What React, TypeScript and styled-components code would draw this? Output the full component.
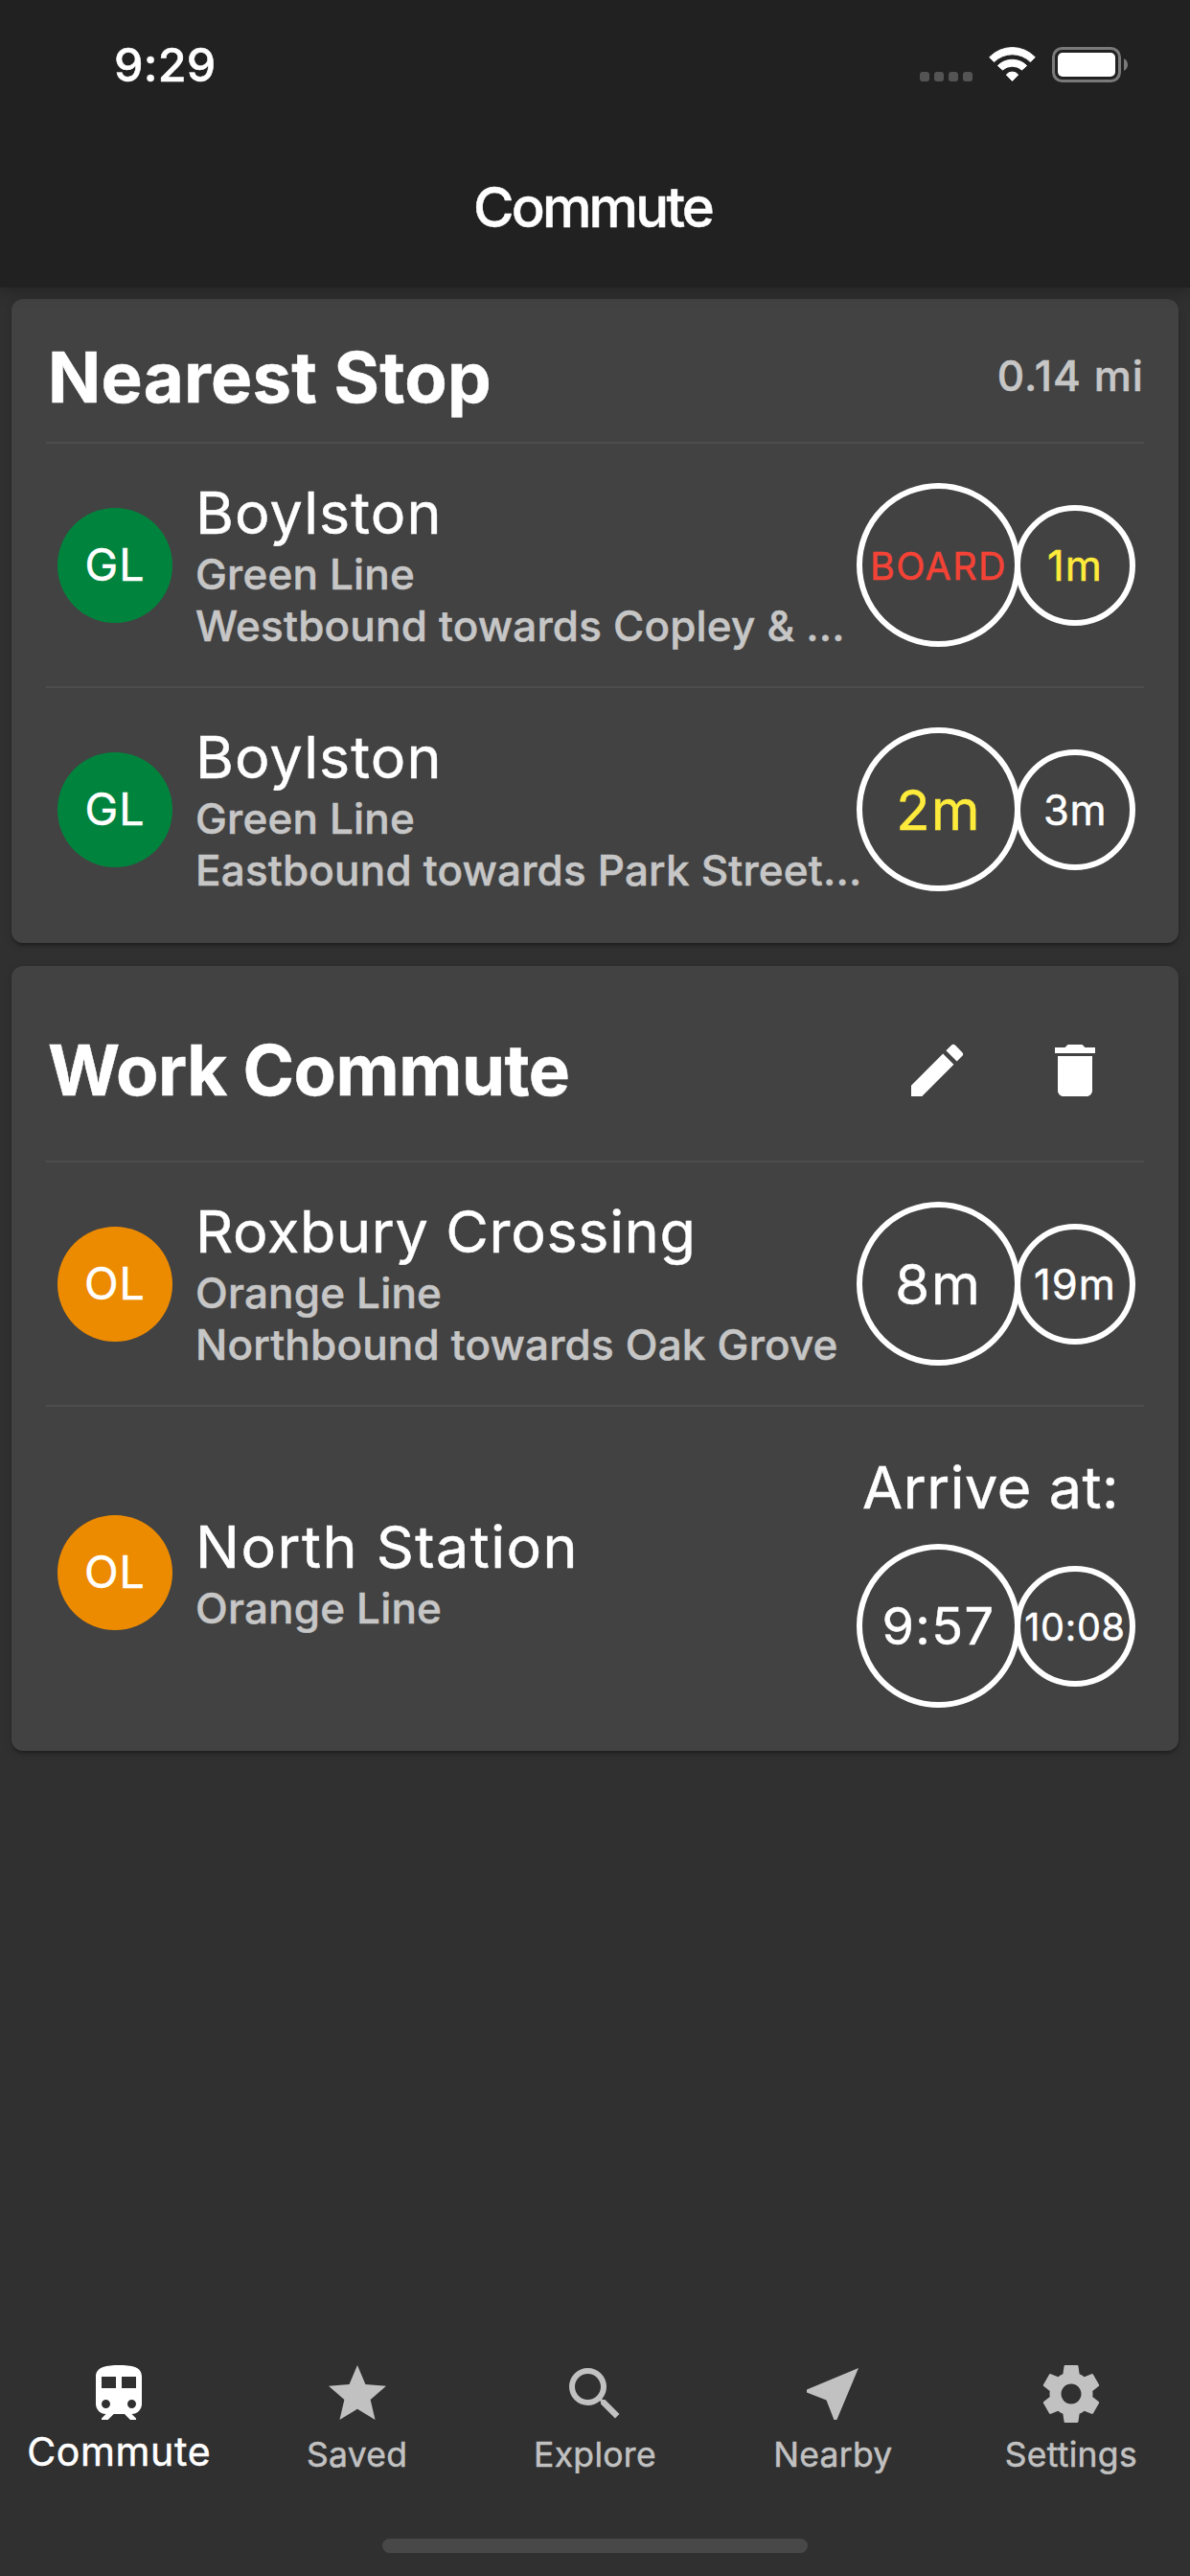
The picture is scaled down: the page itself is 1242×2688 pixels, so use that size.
import React from "react";
import styled, { createGlobalStyle } from "styled-components";
import { MdDelete, MdEdit, MdNearMe, MdSearch, MdStar, MdTrain } from "react-icons/md";

const GlobalStyle = createGlobalStyle`
  * { box-sizing: border-box; }
  body {
    margin: 0;
    background: #303030;
    color: #fff;
    font-family: Inter, "Liberation Sans", sans-serif;
    -webkit-text-stroke: 0.5px currentColor;
  }
`;

const Screen = styled.div`
  display: flex;
  flex-direction: column;
  width: 1242px;
  height: 2688px;
  overflow: hidden;
  background: #303030;
`;

/* ---------- top bar ---------- */

const AppBar = styled.header`
  position: relative;
  z-index: 1;
  flex: none;
  height: 300px;
  background: #212121;
  box-shadow: 0 4px 14px rgba(0, 0, 0, 0.25);
`;

const StatusBar = styled.div`
  display: flex;
  justify-content: space-between;
  align-items: flex-start;
  height: 132px;
  padding: 44px 65px 0 119px;
`;

const Clock = styled.time`
  font-size: 48.5px;
  font-weight: 500;
  line-height: 48px;
  letter-spacing: 0.2px;
`;

const StatusIcons = styled.div`
  display: flex;
  align-items: flex-end;
  gap: 17px;
  margin-top: 5px;
`;

const SignalDots = styled.div`
  display: flex;
  gap: 5px;
  margin-bottom: 1px;
`;

const SignalDot = styled.span`
  width: 10px;
  height: 10px;
  border-radius: 3px;
  background: #545454;
`;

const WifiGlyph = styled.svg`
  display: block;
  margin-bottom: 1px;
  fill: #fff;
  stroke: #fff;
  stroke-width: 1;
  stroke-linejoin: round;
`;

const BatteryGlyph = styled.svg`
  display: block;
`;

const Title = styled.h1`
  margin: 0;
  height: 168px;
  padding-right: 5px;
  text-align: center;
  font-size: 58px;
  font-weight: 500;
  line-height: 168px;
  letter-spacing: -2.8px;
`;

/* ---------- cards ---------- */

const Content = styled.main`
  flex: 1;
  display: flex;
  flex-direction: column;
  gap: 24px;
  padding: 12px;
`;

const Card = styled.section`
  flex: none;
  padding: 0 36px 13px;
  border-radius: 12px;
  background: #424242;
  box-shadow:
    0 4px 3px -2px rgba(0, 0, 0, 0.2),
    0 3px 3px rgba(0, 0, 0, 0.1),
    0 2px 9px rgba(0, 0, 0, 0.12);
`;

const CardHeader = styled.div<{ $height: number }>`
  display: flex;
  align-items: center;
  justify-content: space-between;
  height: ${(p) => p.$height}px;
  padding: 14px 0 0 2px;
`;

const CardTitle = styled.h2<{ $track: number }>`
  margin: 0;
  font-size: 72.5px;
  font-weight: 700;
  line-height: 90px;
  letter-spacing: ${(p) => p.$track}px;
`;

const Distance = styled.span`
  padding-bottom: 4px;
  color: #c6c6c6;
  font-size: 44px;
  font-weight: 500;
  line-height: 54px;
  letter-spacing: 1.06px;
`;

const Actions = styled.div`
  display: flex;
  gap: 72px;
  padding-right: 36px;
`;

const IconButton = styled.button`
  display: block;
  width: 72px;
  height: 72px;
  padding: 0;
  border: 0;
  background: none;
  color: #fff;

  svg {
    display: block;
  }
`;

const Row = styled.div<{ $height: number }>`
  display: flex;
  align-items: center;
  box-sizing: content-box;
  height: ${(p) => p.$height}px;
  padding: 0 9px 0 12px;
  border-top: 2px solid #4d4d4d;
`;

const Avatar = styled.div<{ $color: string }>`
  flex: none;
  display: flex;
  align-items: center;
  justify-content: center;
  width: 120px;
  height: 120px;
  margin-right: 24px;
  padding-bottom: 2px;
  border-radius: 50%;
  background: ${(p) => p.$color};
  font-size: 46.5px;
  letter-spacing: 1.1px;
`;

const Info = styled.div`
  flex: 1;
  min-width: 0;
  white-space: nowrap;
`;

const StopName = styled.div<{ $track: number }>`
  font-size: 61px;
  line-height: 73px;
  letter-spacing: ${(p) => p.$track}px;
`;

const Detail = styled.div`
  color: #c6c6c6;
  font-size: 44px;
  font-weight: 500;
  line-height: 54px;
  letter-spacing: 0.18px;
`;

const Times = styled.div`
  flex: none;
`;

const TimesLabel = styled.div`
  padding: 0 0 6px 6px;
  font-size: 61px;
  line-height: 105px;
  letter-spacing: 0.6px;
`;

const Circles = styled.div`
  display: flex;
  align-items: center;
`;

const Circle = styled.div<{ $size: number; $font: number; $track: number; $color?: string }>`
  display: flex;
  align-items: center;
  justify-content: center;
  width: ${(p) => p.$size}px;
  height: ${(p) => p.$size}px;
  padding-top: ${(p) => (p.$font < 40 ? 2 : 0)}px;
  border: 6px solid #fff;
  border-radius: 50%;
  color: ${(p) => p.$color ?? "#fff"};
  font-size: ${(p) => p.$font}px;
  letter-spacing: ${(p) => p.$track}px;
  white-space: nowrap;

  & + & {
    margin-left: -6px;
  }
`;

/* ---------- bottom navigation ---------- */

const NavBar = styled.nav`
  flex: none;
  display: grid;
  grid-template-columns: repeat(5, 1fr);
  height: 187px;
`;

const NavItem = styled.a<{ $active?: boolean }>`
  display: flex;
  flex-direction: column;
  align-items: center;
  color: ${(p) => (p.$active ? "#fff" : "#c1c1c1")};
  font-size: ${(p) => (p.$active ? 41 : 35.5)}px;
  line-height: ${(p) => (p.$active ? 48 : 56)}px;
  letter-spacing: ${(p) => (p.$active ? 0.65 : 0.3)}px;

  svg {
    display: block;
    flex: none;
  }
`;

const HomeIndicator = styled.div`
  flex: none;
  align-self: center;
  width: 444px;
  height: 15px;
  margin-bottom: 24px;
  border-radius: 8px;
  background: #484848;
`;

/* ---------- icons ---------- */

const Wifi = () => (
  <WifiGlyph width="49" height="36" viewBox="0 0 49 36">
    <path d="M.7 10.7A33 33 0 0 1 48.3 10.7L43.5 15.6A27 27 0 0 0 5.5 15.6Z" />
    <path d="M9.4 19.5A21.3 21.3 0 0 1 39.6 19.5L34.6 24A15.2 15.2 0 0 0 14.4 24Z" />
    <path d="M18.3 29A8 8 0 0 1 30.7 29L24.5 35.4Z" />
  </WifiGlyph>
);

const Battery = () => (
  <BatteryGlyph width="79" height="37" viewBox="0 0 79 37">
    <rect x="1.5" y="1.5" width="69" height="34" rx="9" fill="none" stroke="#7a7a7a" strokeWidth="3" />
    <rect x="6" y="6" width="60" height="25" rx="5" fill="#fff" />
    <path d="M75 12.3C77.6 13.4 79 15.8 79 18.5S77.6 23.6 75 24.7Z" fill="#7a7a7a" />
  </BatteryGlyph>
);

const Gear = () => (
  <svg width="72" height="72" viewBox="0 0 24 24" fill="currentColor">
    <path d="M19.43 12.98c.04-.32.07-.64.07-.98s-.03-.66-.07-.98l2.11-1.65c.19-.15.24-.42.12-.64l-2-3.46c-.12-.22-.39-.3-.61-.22l-2.49 1c-.52-.4-1.08-.73-1.69-.98l-.38-2.65C14.46 2.18 14.25 2 14 2h-4c-.25 0-.46.18-.49.42l-.38 2.65c-.61.25-1.17.59-1.69.98l-2.49-1c-.23-.09-.49 0-.61.22l-2 3.46c-.13.22-.07.49.12.64l2.11 1.65c-.04.32-.07.65-.07.98s.03.66.07.98l-2.11 1.65c-.19.15-.24.42-.12.64l2 3.46c.12.22.39.3.61.22l2.49-1c.52.4 1.08.73 1.69.98l.38 2.65c.03.24.24.42.49.42h4c.25 0 .46-.18.49-.42l.38-2.65c.61-.25 1.17-.59 1.69-.98l2.49 1c.23.09.49 0 .61-.22l2-3.46c.12-.22.07-.49-.12-.64l-2.11-1.65zM12 15.5c-1.93 0-3.5-1.57-3.5-3.5s1.57-3.5 3.5-3.5 3.5 1.57 3.5 3.5-1.57 3.5-3.5 3.5z" />
  </svg>
);

/* ---------- data ---------- */

type Time = { text: string; font: number; track: number; color?: string };

type Departure = {
  line: "GL" | "OL";
  stop: string;
  track: number;
  details: string[];
  label?: string;
  times: [Time, Time];
};

const RED = "#f44336";
const YELLOW = "#ffeb3b";
const LINE_COLORS = { GL: "#00843d", OL: "#ed8b00" };

const nearest: Departure[] = [
  {
    line: "GL",
    stop: "Boylston",
    track: 1.1,
    details: ["Green Line", "Westbound towards Copley & ..."],
    times: [
      { text: "BOARD", font: 39.5, track: 1.4, color: RED },
      { text: "1m", font: 43.5, track: 1, color: YELLOW },
    ],
  },
  {
    line: "GL",
    stop: "Boylston",
    track: 1.1,
    details: ["Green Line", "Eastbound towards Park Street..."],
    times: [
      { text: "2m", font: 58, track: 1.2, color: YELLOW },
      { text: "3m", font: 43.5, track: 0.6 },
    ],
  },
];

const work: Departure[] = [
  {
    line: "OL",
    stop: "Roxbury Crossing",
    track: 0.7,
    details: ["Orange Line", "Northbound towards Oak Grove"],
    times: [
      { text: "8m", font: 58, track: 1.8 },
      { text: "19m", font: 43.5, track: 1 },
    ],
  },
  {
    line: "OL",
    stop: "North Station",
    track: 1.5,
    details: ["Orange Line"],
    label: "Arrive at:",
    times: [
      { text: "9:57", font: 54, track: 1.4 },
      { text: "10:08", font: 39.5, track: 0.8 },
    ],
  },
];

function DepartureRow({ item }: { item: Departure }) {
  const [next, later] = item.times;
  return (
    <Row $height={item.label ? 346 : 253}>
      <Avatar $color={LINE_COLORS[item.line]}>{item.line}</Avatar>
      <Info>
        <StopName $track={item.track}>{item.stop}</StopName>
        {item.details.map((text) => (
          <Detail key={text}>{text}</Detail>
        ))}
      </Info>
      <Times>
        {item.label && <TimesLabel>{item.label}</TimesLabel>}
        <Circles>
          <Circle $size={171} $font={next.font} $track={next.track} $color={next.color}>
            {next.text}
          </Circle>
          <Circle $size={126} $font={later.font} $track={later.track} $color={later.color}>
            {later.text}
          </Circle>
        </Circles>
      </Times>
    </Row>
  );
}

export default function App() {
  return (
    <>
      <GlobalStyle />
      <Screen>
        <AppBar>
          <StatusBar>
            <Clock>9:29</Clock>
            <StatusIcons>
              <SignalDots>
                <SignalDot />
                <SignalDot />
                <SignalDot />
                <SignalDot />
              </SignalDots>
              <Wifi />
              <Battery />
            </StatusIcons>
          </StatusBar>
          <Title>Commute</Title>
        </AppBar>

        <Content>
          <Card>
            <CardHeader $height={149}>
              <CardTitle $track={0.25}>Nearest Stop</CardTitle>
              <Distance>0.14 mi</Distance>
            </CardHeader>
            {nearest.map((item, i) => (
              <DepartureRow key={i} item={item} />
            ))}
          </Card>
          <Card>
            <CardHeader $height={203}>
              <CardTitle $track={-0.5}>Work Commute</CardTitle>
              <Actions>
                <IconButton aria-label="Edit">
                  <MdEdit size={72} />
                </IconButton>
                <IconButton aria-label="Delete">
                  <MdDelete size={72} />
                </IconButton>
              </Actions>
            </CardHeader>
            {work.map((item, i) => (
              <DepartureRow key={i} item={item} />
            ))}
          </Card>
        </Content>

        <NavBar>
          <NavItem $active>
            <MdTrain size={72} />
            Commute
          </NavItem>
          <NavItem>
            <MdStar size={72} />
            Saved
          </NavItem>
          <NavItem>
            <MdSearch size={72} />
            Explore
          </NavItem>
          <NavItem>
            <MdNearMe size={72} />
            Nearby
          </NavItem>
          <NavItem>
            <Gear />
            Settings
          </NavItem>
        </NavBar>
        <HomeIndicator />
      </Screen>
    </>
  );
}
